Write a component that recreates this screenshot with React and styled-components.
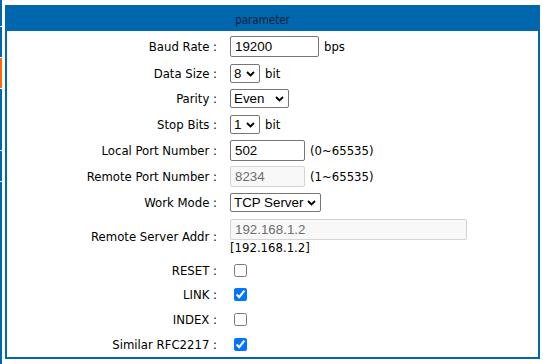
import React from 'react'
import styled, { createGlobalStyle } from 'styled-components'

const GlobalStyle = createGlobalStyle`
    html, body {
        margin: 0;
        padding: 0;
        background: #fff;
    }
    body {
        font-family: "DejaVu Sans Condensed", "DejaVu Sans", sans-serif;
        font-size: 13px;
        color: #000;
    }
`

const BLUE = '#0066ad'

const menuItems = [
    { h: 26 },
    { h: 30 },
    { h: 30, active: true },
    { h: 61 },
    { h: 30 },
    { h: 182 },
]

const rows = [
    { label: 'Baud Rate', h: 27, kind: 'text', value: '19200', width: 89, after: 'bps' },
    { label: 'Data Size', h: 26, kind: 'select', value: '8', options: ['5', '6', '7', '8'], width: 30, after: 'bit' },
    { label: 'Parity', h: 25, kind: 'select', value: 'Even', options: ['None', 'Odd', 'Even', 'Mark', 'Space'], width: 59 },
    { label: 'Stop Bits', h: 26, kind: 'select', value: '1', options: ['1', '2'], width: 30, after: 'bit' },
    { label: 'Local Port Number', h: 26, kind: 'text', value: '502', width: 75, after: '(0~65535)' },
    { label: 'Remote Port Number', h: 27, kind: 'text', value: '8234', width: 75, disabled: true, after: '(1~65535)' },
    { label: 'Work Mode', h: 25, kind: 'select', value: 'TCP Server', options: ['TCP Server', 'TCP Client', 'UDP'], width: 91 },
    { label: 'Remote Server Addr', h: 43, kind: 'addr', value: '192.168.1.2', width: 237 },
    { label: 'RESET', h: 24, kind: 'check', checked: false },
    { label: 'LINK', h: 25, kind: 'check', checked: true },
    { label: 'INDEX', h: 25, kind: 'check', checked: false },
    { label: 'Similar RFC2217', h: 25, kind: 'check', checked: true },
]

const Chevron = () => (
    <ChevronIcon width="9" height="6" viewBox="0 0 9 6">
        <path d="M1 1 L4.5 4.5 L8 1" fill="none" stroke="#000" strokeWidth="1.8" />
    </ChevronIcon>
)

const renderField = (row) => {
    if (row.kind === 'text') {
        return (
            <>
                <TextInput $w={row.width} defaultValue={row.value} disabled={row.disabled} />
                {row.after && <After>{row.after}</After>}
            </>
        )
    }
    if (row.kind === 'select') {
        return (
            <>
                <SelectWrap $w={row.width}>
                    <Select defaultValue={row.value}>
                        {row.options.map((o) => (
                            <option key={o} value={o}>{o}</option>
                        ))}
                    </Select>
                    <Chevron />
                </SelectWrap>
                {row.after && <After>{row.after}</After>}
            </>
        )
    }
    if (row.kind === 'addr') {
        return (
            <AddrStack>
                <TextInput $w={row.width} defaultValue={row.value} disabled />
                <AddrNote>[{row.value}]</AddrNote>
            </AddrStack>
        )
    }
    return <Check type="checkbox" defaultChecked={row.checked} />
}

const App = () => {
    return (
        <>
            <GlobalStyle />
            <Page>
                <SideMenu>
                    {menuItems.map((m, i) => (
                        <MenuItem key={i} $h={m.h} $active={m.active} />
                    ))}
                </SideMenu>
                <Panel>
                    <PanelHeader>parameter</PanelHeader>
                    <Form>
                        {rows.map((row) => (
                            <Row key={row.label} $h={row.h}>
                                <Label>{row.label} :</Label>
                                <Field>{renderField(row)}</Field>
                            </Row>
                        ))}
                    </Form>
                </Panel>
            </Page>
        </>
    )
}

const Page = styled.div`
    display: flex;
    align-items: flex-start;
    width: 543px;
    height: 364px;
    overflow: hidden;
`

const SideMenu = styled.div`
    display: flex;
    flex-direction: column;
    gap: 1px;
    width: 2px;
    flex-shrink: 0;
`

const MenuItem = styled.div`
    height: ${(p) => p.$h}px;
    background: ${(p) => (p.$active ? '#ff6a00' : BLUE)};
`

const Panel = styled.div`
    margin: 5px 0 0 3px;
    width: 535px;
    box-sizing: border-box;
    border: 2px solid ${BLUE};
`

const PanelHeader = styled.div`
    height: 26px;
    margin-top: -2px;
    padding: 4px 20px 0 0;
    box-sizing: border-box;
    background: ${BLUE};
    display: flex;
    align-items: center;
    justify-content: center;
    font-size: 11.5px;
    color: #10213a;
`

const Form = styled.div`
    display: flex;
    flex-direction: column;
    padding-top: 2px;
`

const Row = styled.div`
    display: grid;
    grid-template-columns: 223px 1fr;
    align-items: center;
    height: ${(p) => p.$h}px;
`

const Label = styled.div`
    text-align: right;
    padding-right: 13px;
    white-space: nowrap;
`

const Field = styled.div`
    display: flex;
    align-items: center;
`

const TextInput = styled.input`
    width: ${(p) => p.$w}px;
    height: 21px;
    box-sizing: border-box;
    margin: 0;
    padding: 1px 4px;
    border: 1px solid #767676;
    border-radius: 2px;
    font-family: "Liberation Sans", Arial, sans-serif;
    font-size: 13.33px;
    color: #000;
    background: #fff;

    &:disabled {
        background: #f8f8f8;
        border-color: #d4d4d4;
        color: #6d6d6d;
    }
`

const SelectWrap = styled.div`
    position: relative;
    width: ${(p) => p.$w}px;
    height: 19px;
`

const Select = styled.select`
    appearance: none;
    -webkit-appearance: none;
    width: 100%;
    height: 100%;
    box-sizing: border-box;
    margin: 0;
    padding: 0 14px 0 3px;
    border: 1px solid #767676;
    border-radius: 2px;
    font-family: "Liberation Sans", Arial, sans-serif;
    font-size: 13.33px;
    color: #000;
    background: #fff;
`

const ChevronIcon = styled.svg`
    position: absolute;
    right: 5px;
    top: 7px;
    pointer-events: none;
`

const After = styled.span`
    margin-left: 5px;
`

const AddrStack = styled.div`
    display: flex;
    flex-direction: column;
    align-items: flex-start;
    padding-top: 1px;
`

const AddrNote = styled.span`
    line-height: 15px;
`

const Check = styled.input`
    width: 13px;
    height: 13px;
    margin: 0 0 0 4px;
`

export default App
